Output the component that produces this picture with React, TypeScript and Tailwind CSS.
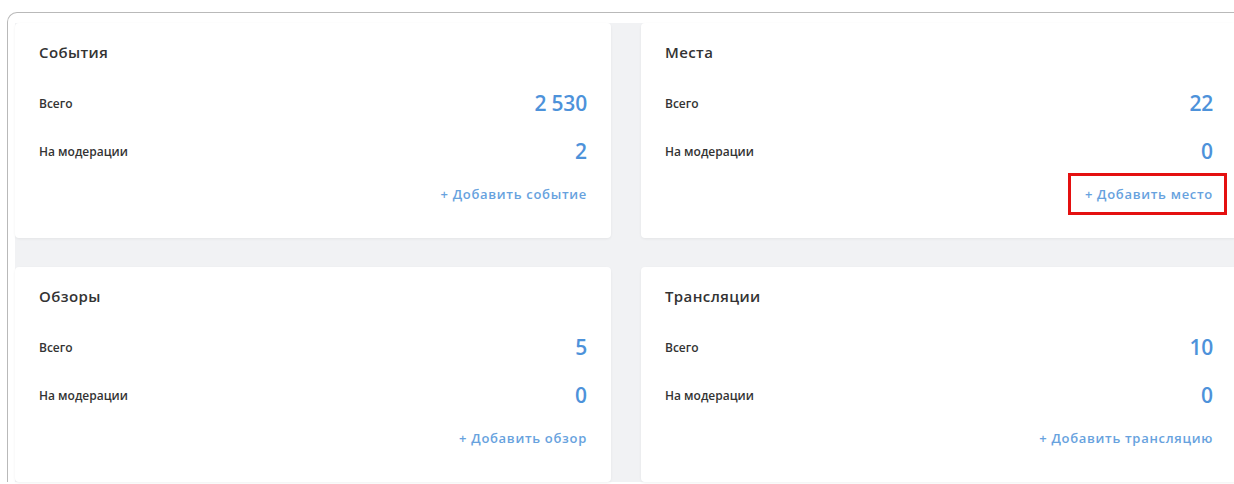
import React from 'react';

interface StatCard {
  title: string;
  total: string;
  moderation: string;
  addLabel: string;
  highlight?: boolean;
}

const cards: StatCard[] = [
  { title: 'События', total: '2 530', moderation: '2', addLabel: 'Добавить событие' },
  { title: 'Места', total: '22', moderation: '0', addLabel: 'Добавить место', highlight: true },
  { title: 'Обзоры', total: '5', moderation: '0', addLabel: 'Добавить обзор' },
  { title: 'Трансляции', total: '10', moderation: '0', addLabel: 'Добавить трансляцию' },
];

function Card({ card }: { card: StatCard }) {
  return (
    <div className="h-[215px] rounded-[4px] bg-white px-[24px] pt-[19px] shadow-[0_1px_3px_rgba(0,0,0,0.06)]">
      <div className="h-[20px] text-[15px] font-semibold leading-[20px] tracking-[0.4px] text-[#333]">{card.title}</div>

      <div className="mt-[27px] flex h-[30px] items-center justify-between">
        <span className="text-[12px] font-semibold text-[#333]">Всего</span>
        <span className="text-[21px] font-semibold tracking-[-0.2px] text-[#4d92da]">{card.total}</span>
      </div>
      <div className="mt-[18px] flex h-[30px] items-center justify-between">
        <span className="text-[12px] font-semibold text-[#333]">На модерации</span>
        <span className="text-[21px] font-semibold text-[#4d92da]">{card.moderation}</span>
      </div>

      <div className="mt-[19px] flex h-[16px] justify-end">
        <a href="#" className="relative text-[13px] font-semibold leading-[16px] tracking-[0.7px] text-[#67a2de]">
          + {card.addLabel}
          {card.highlight && (
            <span className="pointer-events-none absolute -bottom-[13px] -left-[17px] -right-[14px] -top-[13px] border-[3px] border-[#e41010]" />
          )}
        </a>
      </div>
    </div>
  );
}

export default function App() {
  return (
    <div className="h-[484px] w-[1234px] overflow-hidden bg-white font-['Open_Sans',sans-serif]">
      <div className="ml-[7px] mt-[12px] w-[1260px] rounded-tl-[10px] border-l border-t border-[#b9b9b9] pl-[7px] pt-[10px]">
        <div className="grid w-[1222px] grid-cols-2 gap-x-[30px] gap-y-[29px] bg-[#f1f2f4]">
          {cards.map((card) => (
            <Card key={card.title} card={card} />
          ))}
        </div>
      </div>
    </div>
  );
}
